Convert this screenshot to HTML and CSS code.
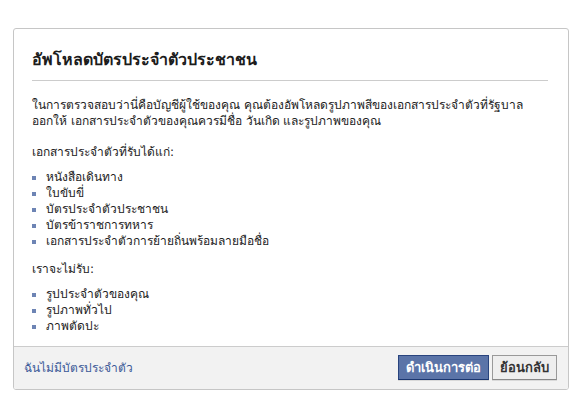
FILE: index.html
```html
<!DOCTYPE html>
<html lang="th">
<head>
  <meta charset="UTF-8">
  <title>อัพโหลดบัตรประจำตัวประชาชน</title>
  <link rel="stylesheet" href="styles.css">
</head>
<body>
  <div class="dialog">
    <div class="dialog-body">
      <h2 class="title">อัพโหลดบัตรประจำตัวประชาชน</h2>
      <p class="intro">ในการตรวจสอบว่านี่คือบัญชีผู้ใช้ของคุณ คุณต้องอัพโหลดรูปภาพสีของเอกสารประจำตัวที่รัฐบาล <span class="nowrap">ออกให้</span> เอกสารประจำตัวของคุณควรมีชื่อ วันเกิด และรูปภาพของคุณ</p>
      <p class="lead">เอกสารประจำตัวที่รับได้แก่:</p>
      <ul>
        <li>หนังสือเดินทาง</li>
        <li>ใบขับขี่</li>
        <li>บัตรประจำตัวประชาชน</li>
        <li>บัตรข้าราชการทหาร</li>
        <li>เอกสารประจำตัวการย้ายถิ่นพร้อมลายมือชื่อ</li>
      </ul>
      <p>เราจะไม่รับ:</p>
      <ul>
        <li>รูปประจำตัวของคุณ</li>
        <li>รูปภาพทั่วไป</li>
        <li>ภาพตัดปะ</li>
      </ul>
    </div>
    <div class="dialog-footer">
      <a class="no-id" href="#">ฉันไม่มีบัตรประจำตัว</a>
      <div class="buttons">
        <button class="btn btn-primary" type="button">ดำเนินการต่อ</button>
        <button class="btn" type="button">ย้อนกลับ</button>
      </div>
    </div>
  </div>
</body>
</html>
```

FILE: styles.css
```css
html, body {
  margin: 0;
  padding: 0;
  background: #fff;
  font-family: Tahoma, "DejaVu Sans", "Noto Sans", sans-serif;
  font-size: 12px;
  color: #222;
}

body {
  padding: 28px 9px 0 13px;
}

.dialog {
  border: 1px solid #c6c6c6;
  border-radius: 3px;
  overflow: hidden;
}

.dialog-body {
  padding: 18px 20px 12px 18px;
}

.title {
  margin: 0;
  padding-bottom: 8px;
  font-size: 16px;
  font-weight: bold;
  color: #1c1c1c;
  border-bottom: 1px solid #ccc;
}

.nowrap {
  white-space: nowrap;
}

.dialog-body p {
  margin: 12px 0 0 0;
  line-height: 16px;
}

.dialog-body p.intro {
  margin-top: 16px;
}

.dialog-body p.lead {
  margin-top: 15px;
}

.dialog-body ul {
  list-style: none;
  margin: 9px 0 0 0;
  padding: 0;
}

.dialog-body li {
  position: relative;
  padding-left: 14px;
  line-height: 16px;
}

.dialog-body li::before {
  content: "";
  position: absolute;
  left: 0;
  top: 7px;
  width: 4px;
  height: 4px;
  background: #6d84b4;
}

.dialog-footer {
  display: flex;
  align-items: center;
  justify-content: space-between;
  background: #f2f2f2;
  border-top: 1px solid #ccc;
  padding: 8px 11px 9px 10px;
}

.no-id {
  color: #3b5998;
  text-decoration: none;
}

.buttons {
  display: flex;
  gap: 3px;
}

.btn {
  font-family: inherit;
  font-size: 13px;
  font-weight: bold;
  height: 25px;
  padding: 0 7px;
  color: #333;
  background: #eee;
  border: 1px solid #999;
  border-color: #999 #999 #888;
  box-shadow: 0 1px 0 rgba(0,0,0,0.1);
}

.btn-primary {
  background: #5b74a8;
  color: #fff;
  border-color: #29447e #29447e #1a356e;
}
```
